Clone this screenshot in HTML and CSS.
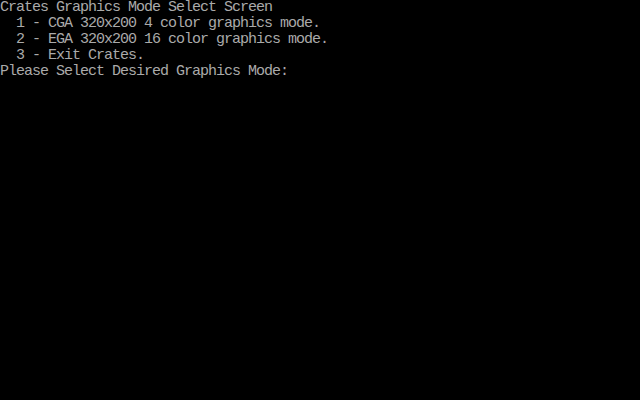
FILE: index.html
```html
<!DOCTYPE html>
<html>
<head>
<meta charset="utf-8">
<link rel="stylesheet" href="styles.css">
</head>
<body>
<pre class="screen">Crates Graphics Mode Select Screen
  1 - CGA 320x200 4 color graphics mode.
  2 - EGA 320x200 16 color graphics mode.
  3 - Exit Crates.
Please Select Desired Graphics Mode:</pre>
</body>
</html>
```
FILE: styles.css
```css
html, body {
  margin: 0;
  padding: 0;
  background: #000;
  width: 640px;
  height: 400px;
  overflow: hidden;
}
.screen {
  margin: 0;
  padding: 0;
  color: #aaaaaa;
  font-family: "Liberation Mono", "DejaVu Sans Mono", monospace;
  font-size: 15px;
  letter-spacing: -1px;
  line-height: 16px;
  white-space: pre;
}
```
